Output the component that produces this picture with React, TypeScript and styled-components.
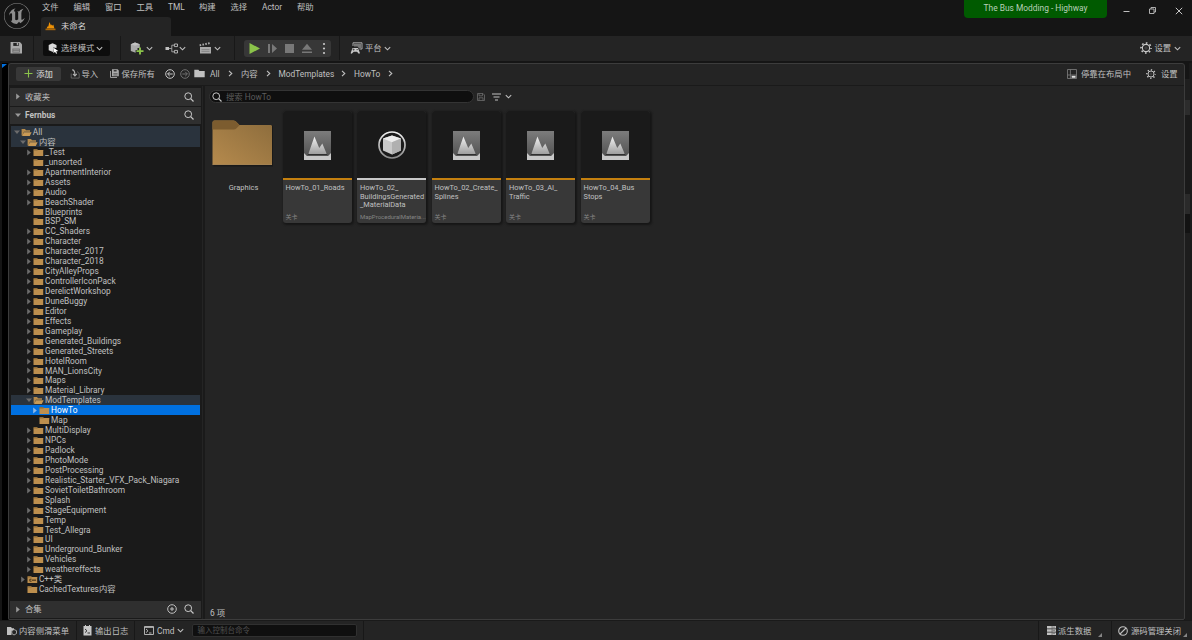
import React from 'react';
import styled, { createGlobalStyle, css } from 'styled-components';
import { SiUnrealengine } from 'react-icons/si';

const GlobalStyle = createGlobalStyle`
  * { box-sizing: border-box; }
  body { margin: 0; background: #151515; overflow: hidden; }
  svg { display: block; flex: none; }
`;

const Window = styled.div`
  width: 1192px;
  height: 640px;
  display: flex;
  flex-direction: column;
  background: #151515;
  color: #c0c0c0;
  font: 8.33px/10px Roboto, 'Noto Sans CJK SC', sans-serif;
  white-space: nowrap;
  overflow: hidden;
`;

const TitleBar = styled.header`
  height: 36px;
  flex: none;
  display: flex;
`;
const Logo = styled.div`
  width: 41px;
  padding: 3px 0 0 4px;
  color: #8d8d8d;
`;
const TitleMain = styled.div`
  flex: 1;
`;
const Menu = styled.nav`
  display: flex;
  height: 17px;
  padding: 2px 0 0 1px;
`;
const MenuItem = styled.span<{ $w: number }>`
  width: ${p => p.$w}px;
`;
const LevelTab = styled.div`
  width: 130px;
  height: 19px;
  border-radius: 3px 3px 0 0;
  background: #242424;
  display: flex;
  align-items: center;
  gap: 5px;
  padding: 0 0 1px 4px;
  color: #d8d8d8;
`;
const ProjectBadge = styled.div`
  width: 143px;
  height: 18px;
  background: #005a00;
  border-radius: 0 0 4px 4px;
  color: #b9d0b9;
  text-align: center;
  line-height: 17px;
  font-size: 8.4px;
`;
const WindowButtons = styled.div`
  width: 85px;
  height: 21px;
  display: flex;
  align-items: center;
  justify-content: space-between;
  padding: 0 9px 0 16px;
`;

const Toolbar = styled.div`
  height: 25px;
  flex: none;
  display: flex;
  align-items: center;
  background: #242424;
  padding-bottom: 1px;
`;
const Item = styled.div<{ $ml?: number; $w?: number; $gap?: number }>`
  display: flex;
  align-items: center;
  flex: none;
  gap: ${p => p.$gap ?? 3}px;
  margin-left: ${p => p.$ml ?? 0}px;
  ${p => p.$w !== undefined && css`width: ${p.$w}px;`}
`;
const Divider = styled.i<{ $ml?: number }>`
  width: 1px;
  align-self: stretch;
  flex: none;
  background: #181818;
  margin-left: ${p => p.$ml ?? 0}px;
`;
const ModeButton = styled(Item)`
  height: 16px;
  background: #0d0d0d;
  border-radius: 2px;
  padding-left: 5px;
`;
const PlayGroup = styled(Item)`
  height: 17px;
  background: #373737;
  border-radius: 3px;
`;
const Spacer = styled.div`
  flex: 1;
`;

const Workspace = styled.div`
  height: 559px;
  flex: none;
  display: flex;
  padding-top: 2px;
`;
const LeftStrip = styled.div`
  width: 8px;
  background: #000;
  border-left: 2px solid #151515;
`;
const RightStrip = styled.div`
  width: 7px;
  padding-top: 16px;
  border-right: 3px solid #1a1a1a;
  background: #151515;
`;
const StripBlock = styled.div<{ $h: number; $c: string }>`
  width: 5px;
  height: ${p => p.$h}px;
  background: ${p => p.$c};
`;
const Drawer = styled.section`
  width: 1177px;
  border: 1px solid #3c3c3c;
  border-radius: 3px 3px 2px 2px;
  background: #242424;
  display: flex;
  flex-direction: column;
`;
const DrawerBar = styled.div`
  height: 22px;
  flex: none;
  display: flex;
  align-items: center;
  padding-bottom: 2px;
  border-bottom: 1px solid #1a1a1a;
`;
const AddButton = styled(Item)`
  height: 14px;
  border-radius: 2px;
  background: #383838;
  color: #e0e0e0;
  justify-content: center;
`;
const DrawerBody = styled.div`
  flex: 1;
  display: flex;
  min-height: 0;
`;
const Sidebar = styled.aside`
  width: 193px;
  padding: 2px 1px 0 1px;
  display: flex;
  flex-direction: column;
  background: #1a1a1a;
`;
const SectionHead = styled.div<{ $bold?: boolean; $h: number }>`
  height: ${p => p.$h}px;
  flex: none;
  display: flex;
  align-items: center;
  gap: 4px;
  padding: 0 7px 1px 5px;
  background: #2f2f2f;
  margin-bottom: 1px;
  font-weight: ${p => (p.$bold ? 700 : 400)};
`;
const Tree = styled.div`
  flex: 1;
  min-height: 0;
  padding: 1px 1px 0 1px;
`;
const TreeRow = styled.div<{ $depth: number; $tone?: 'path' | 'selected' }>`
  height: 9.945px;
  display: flex;
  align-items: center;
  padding-top: 1px;
  padding-left: ${p => 2.6 + p.$depth * 6.1}px;
  line-height: 9.9px;
  font-size: 8.35px;
  background: ${p => (p.$tone === 'selected' ? '#0070e0' : p.$tone === 'path' ? '#2a333d' : 'none')};
  color: ${p => (p.$tone === 'selected' ? '#fff' : '#c0c0c0')};
  &:first-child {
    height: 10.945px;
    padding-top: 2px;
  }
`;
const Twisty = styled.span`
  width: 7.2px;
  flex: none;
`;
const RowIcon = styled.span`
  width: 12px;
  flex: none;
`;
const RowName = styled.span`
  padding-top: 1px;
`;
const Splitter = styled.div`
  width: 2px;
  background: #1a1a1a;
  margin-left: 1px;
`;
const Content = styled.main`
  flex: 1;
  display: flex;
  flex-direction: column;
  padding: 4px 0 1px 4px;
`;
const SearchRow = styled.div`
  display: flex;
  align-items: center;
  height: 13px;
`;
const SearchBox = styled.div`
  width: 265px;
  height: 13px;
  border-radius: 7px;
  background: #0f0f0f;
  border: 1px solid #343434;
  display: flex;
  align-items: center;
  gap: 4px;
  padding-left: 2px;
  color: #5c5c5c;
`;
const Grid = styled.div`
  flex: 1;
  display: flex;
  align-items: flex-start;
  padding: 8px 0 0 3px;
  gap: 5.5px;
`;
const FolderTile = styled.div`
  width: 62px;
  margin-right: 3px;
  padding-top: 9px;
  text-align: center;
`;
const FolderName = styled.div`
  margin-top: 16px;
  padding-left: 1px;
  font-size: 7.5px;
  line-height: 9px;
`;
const Card = styled.article`
  width: 69px;
  height: 112px;
  border-radius: 3px;
  background: #383838;
  box-shadow: 1px 1px 2px 1px #171717;
  overflow: hidden;
  display: flex;
  flex-direction: column;
`;
const Thumb = styled.div<{ $accent: string }>`
  height: 69px;
  flex: none;
  background: #1a1a1a;
  border-bottom: 2px solid ${p => p.$accent};
  display: flex;
  align-items: center;
  justify-content: center;
  padding-top: 1px;
`;
const AssetName = styled.div`
  padding: 4px 0 0 3px;
  font-size: 7.4px;
  line-height: 8.7px;
  flex: 1;
`;
const AssetType = styled.div`
  padding: 0 0 2px 3px;
  font-size: 6px;
  line-height: 9px;
  color: #858585;
`;
const CountLine = styled.div`
  padding-left: 1px;
`;

const StatusBar = styled.footer`
  height: 20px;
  flex: none;
  display: flex;
  align-items: center;
  background: #242424;
  border-top: 1px solid #1a1a1a;
`;
const Console = styled.div`
  width: 165px;
  height: 13px;
  margin-left: 8px;
  border-radius: 2px;
  background: #0f0f0f;
  border: 1px solid #303030;
  padding-left: 4px;
  line-height: 11px;
  font-size: 7.5px;
  color: #505050;
`;
const StatusCell = styled(Item)`
  height: 19px;
`;
const Corner = styled.i<{ $ml: number }>`
  width: 0;
  height: 0;
  align-self: flex-end;
  margin: 0 0 3px ${p => p.$ml}px;
  border-left: 4px solid transparent;
  border-bottom: 4px solid #858585;
`;

const Chevron = ({ right = false }: { right?: boolean }) => (
  <svg width="7" height="7" viewBox="0 0 7 7" fill="none" stroke="#c0c0c0" strokeWidth="1.1">
    <path d={right ? 'M2 .8 4.8 3.5 2 6.2' : 'M.8 2.2 3.5 4.8 6.2 2.2'} />
  </svg>
);
const Arrow = ({ open, color = '#6c6c6c' }: { open?: boolean; color?: string }) => (
  <svg width="6" height="7" viewBox="0 0 6 7" fill={color}>
    <path d={open ? 'M0 1.5H6L3 5Z' : 'M1.2 .5V6.5L4.8 3.5Z'} />
  </svg>
);
const Magnifier = ({ size = 10 }: { size?: number }) => (
  <svg width={size} height={size} viewBox="0 0 10 10" fill="none" stroke="#c8c8c8" strokeWidth="1">
    <circle cx="4.2" cy="4.2" r="3.4" />
    <path d="M6.7 6.7 9.5 9.5" strokeWidth="1.2" />
  </svg>
);
const SmallFolder = ({ open, cpp }: { open?: boolean; cpp?: boolean }) => (
  <svg width="11" height="9" viewBox="0 0 11 9">
    {open ? (
      <>
        <path d="M.6 7.5V1.1H4L5 2.2H9V3.8H3L1.4 7.5Z" fill="#b58a4b" />
        <path d="M3 4.3H10.6L8.8 8H1Z" fill="#c99a55" />
      </>
    ) : (
      <>
        <path d="M.5 1H4L5.1 2H10.2V3H.5Z" fill="#8f6c38" />
        <path d="M.5 2.6H4.2L5 2H10.2V8H.5Z" fill="#bd8f4e" />
      </>
    )}
    {cpp && <path d="M4.6 4.2H2.8V6.2H4.6M5.2 5.2H6.8M7.2 5.2H8.8M6 4.5V5.9M8 4.5V5.9" fill="none" stroke="#352611" strokeWidth=".8" />}
  </svg>
);
const SaveIcon = ({ size = 11, color = '#aaa' }: { size?: number; color?: string }) => (
  <svg width={size} height={size} viewBox="0 0 11 11">
    <path d="M.5 0H9L11 2V10.5H.5Z" fill={color} />
    <path d="M3 .8H8V3.6H3Z" fill="#242424" />
    <path d="M6.2 .8H7.4V3H6.2Z" fill={color} />
    <path d="M2.2 6H9V9.7H2.2Z" fill="#6a6a6a" />
    <path d="M3 7.2H8.2M3 8.6H8.2" stroke={color} strokeWidth=".7" />
  </svg>
);
const SaveOutline = () => (
  <svg width="8" height="8" viewBox="0 0 8 8" fill="none" stroke="#6c6c6c" strokeWidth=".8">
    <path d="M.5.5H6L7.5 2V7.5H.5ZM2 .5V2.8H5.5V.5M2 7.5V4.8H6V7.5" />
  </svg>
);
const SaveAllIcon = () => (
  <svg width="9" height="9" viewBox="0 0 9 9">
    <path d="M.5 2V8.5H7" fill="none" stroke="#9a9a9a" />
    <path d="M2 .3H7.6L8.8 1.5V7.3H2Z" fill="#aaa" />
    <path d="M3.7 1H6.6V2.5H3.7Z" fill="#3a3a3a" />
    <path d="M3.4 4.6H7.5M3.4 6H7.5" stroke="#4a4a4a" strokeWidth=".7" />
  </svg>
);
const ModeIcon = () => (
  <svg width="11" height="11" viewBox="0 0 11 11">
    <path d="M4.5.3 8.5 2V5L5 4.4V9L.7 7.3V2Z" fill="#d9d9d9" />
    <path d="M5.2 4.5 10.3 8 8 8.4 9.2 10.3 8.1 10.8 7 8.8 5.5 10.3Z" fill="#fff" />
  </svg>
);
const AddCube = () => (
  <svg width="14" height="13" viewBox="0 0 14 13">
    <path d="M5 .5 9.8 2.2V6H7.5V8H5.6V10.8L.8 9V2.2Z" fill="#aaa" />
    <path d="M.8 2.2 5 3.8 9.8 2.2 5 .5Z" fill="#c2c2c2" />
    <path d="M10 5.6V12.6M6.5 9.1H13.5" stroke="#8bc34a" strokeWidth="1.9" />
  </svg>
);
const BlueprintIcon = () => (
  <svg width="14" height="11" viewBox="0 0 14 11">
    <path d="M.5 4H4V7H.5Z" fill="#c0c0c0" />
    <path d="M4 5.5H6.8M6.8 5.5V2.2H9M6.8 5.5V8.8H9" fill="none" stroke="#aaa" strokeWidth=".9" />
    <path d="M9.4 1H12.5V3.6H9.4ZM9.4 7.4H12.5V10H9.4Z" fill="#242424" stroke="#c0c0c0" strokeWidth=".9" />
  </svg>
);
const Clapper = () => (
  <svg width="13" height="12" viewBox="0 0 13 12">
    <path d="M1 5H12V11.5H1Z" fill="#aaa" />
    <path d="M.6 3.4 11.8.9" stroke="#aaa" strokeWidth="1.9" strokeDasharray="1.6 1.3" />
    <path d="M2.5 7.6H10.5M2.5 9.4H10.5" stroke="#6d6d6d" strokeWidth=".6" />
  </svg>
);
const Platforms = () => (
  <svg width="13" height="12" viewBox="0 0 13 12">
    <path d="M3 .8H12V7H9.5M3 .8V4" fill="none" stroke="#aaa" />
    <path d="M4 1.8H11V6.2H9L7.5 4.5H4Z" fill="#777" />
    <path d="M2.5 6H8L10 11.2 8.8 11.8 7 9.8H3.7L1.7 11.8.6 11.2Z" fill="#c8c8c8" />
    <path d="M2.6 7.6H4.6M3.6 6.6V8.6M6.4 7.6H8" stroke="#333" strokeWidth=".7" />
  </svg>
);
const Gear = ({ size = 12 }: { size?: number }) => (
  <svg width={size} height={size} viewBox="0 0 12 12" fill="none" stroke="#c8c8c8">
    <circle cx="6" cy="6" r="3.6" strokeWidth="1.1" />
    <circle cx="6" cy="6" r="5" strokeWidth="1.7" strokeDasharray="1.6 2.327" strokeDashoffset=".8" />
    <circle cx="6" cy="6" r="1.2" strokeWidth=".4" opacity=".5" />
  </svg>
);
const NavCircle = ({ back }: { back?: boolean }) => (
  <svg width="10" height="10" viewBox="0 0 10 10" fill="none" stroke={back ? '#c8c8c8' : '#707070'}>
    <circle cx="5" cy="5" r="4.3" />
    <path d={back ? 'M7.7 5H2.7M4.8 2.8 2.6 5 4.8 7.2' : 'M2.3 5H7.3M5.2 2.8 7.4 5 5.2 7.2'} />
  </svg>
);
const ImportIcon = () => (
  <svg width="10" height="10" viewBox="0 0 10 10" fill="none" stroke="#b5b5b5">
    <path d="M1.2 4.5V9.1H9.2V4.5L7 2.5" strokeWidth=".8" opacity=".5" />
    <path d="M2.2.9C4.2.9 4.9 2 4.9 6M3 4.9 4.9 7 6.8 4.9" strokeWidth="1.1" />
  </svg>
);
const DockIcon = () => (
  <svg width="10" height="10" viewBox="0 0 10 10" fill="none" stroke="#808080" strokeWidth=".8">
    <path d="M.5.5H9.5V9.5H.5ZM3.4.5V9.5M.5 6H9.5" />
    <path d="M4.6 6.8H8.6V8.8H4.6Z" fill="#e0e0e0" stroke="none" />
  </svg>
);
const LevelIcon = () => (
  <svg width="11" height="10" viewBox="0 0 11 10">
    <path d="M1.6 7.6 2.4 5.4 3.3 5.6 4.4 1 6 4.5 6.7 3.4 7.6 4.8 8.3 3.6 9.4 7.6Z" fill="#ee9206" />
    <path d="M.5 7.6H10.5V9.2H.5Z" fill="#a9660a" />
  </svg>
);
const MountainIcon = () => (
  <svg width="27" height="29" viewBox="0 0 28 29" preserveAspectRatio="none">
    <defs>
      <linearGradient id="sky" x1="0" y1="0" x2="0" y2="1">
        <stop offset="0" stopColor="#7c7c7c" />
        <stop offset="1" stopColor="#4c4c4c" />
      </linearGradient>
      <linearGradient id="peak" x1="0" y1="0" x2="0" y2="1">
        <stop offset="0" stopColor="#f2f2f2" />
        <stop offset="1" stopColor="#a0a0a0" />
      </linearGradient>
    </defs>
    <path d="M0 0H28V29H0Z" fill="url(#sky)" />
    <path d="M0 22 3 24.9H25L28 22V29H0Z" fill="#c8c8c8" />
    <path d="M4 23.2H24" stroke="#303030" strokeWidth="1.6" />
    <path d="M4.5 22.9 10.8 5.5 15.8 17 19 12.5 23.6 22.9Z" fill="url(#peak)" />
  </svg>
);
const CubeIcon = () => (
  <svg width="30" height="30" viewBox="0 0 30 30">
    <defs>
      <linearGradient id="ring" x1="0" y1="0" x2="0" y2="1">
        <stop offset="0" stopColor="#eee" />
        <stop offset="1" stopColor="#8c8c8c" />
      </linearGradient>
    </defs>
    <circle cx="15" cy="15" r="13" fill="#1b1b1b" stroke="url(#ring)" strokeWidth="1.7" />
    <path d="M15 5.5 24 8.6V20.5L15 24.5 6 20.5V8.6Z" fill="#c9c9c9" />
    <path d="M6 8.6 15 5.5 24 8.6 15 12.2Z" fill="#ececec" />
    <path d="M15 12.2 24 8.6V20.5L15 24.5Z" fill="#b0b0b0" />
  </svg>
);
const BigFolder = () => (
  <svg width="62" height="47" viewBox="0 0 62 47">
    <defs>
      <linearGradient id="folder" x1="0" y1="1" x2="1" y2="0">
        <stop offset="0" stopColor="#b58a4d" />
        <stop offset="1" stopColor="#8c6c3c" />
      </linearGradient>
    </defs>
    <path d="M1.5 3Q1.5 1 3.5 1H22Q24 1 25 2.5L28 5.5H60Q61 5.5 61 7V46.5H1.5Z" fill="#151515" opacity=".7" />
    <path d="M.5 2.5Q.5.5 2.5.5H21.5Q23.5.5 24.5 2L27.5 5H59Q60 5 60 6.5V44.5H.5Z" fill="url(#folder)" />
    <path d="M.5 2.5Q.5.5 2.5.5H21.5Q23.5.5 24.5 2L27.5 5.2 24.5 8.3Q23.5 9.5 21.5 9.5H.5Z" fill="#7c5c2f" />
    <path d="M.5 44.5H60" stroke="#c29a60" strokeWidth=".7" />
  </svg>
);

type Row = [name: string, depth: number, state: '+' | '-' | '', tone?: 'path' | 'selected'];
const treeRows: Row[] = [
  ['All', 0, '-', 'path'],
  ['内容', 1, '-', 'path'],
  ['_Test', 2, '+'],
  ['_unsorted', 2, ''],
  ['ApartmentInterior', 2, '+'],
  ['Assets', 2, '+'],
  ['Audio', 2, '+'],
  ['BeachShader', 2, '+'],
  ['Blueprints', 2, ''],
  ['BSP_SM', 2, ''],
  ['CC_Shaders', 2, '+'],
  ['Character', 2, '+'],
  ['Character_2017', 2, '+'],
  ['Character_2018', 2, '+'],
  ['CityAlleyProps', 2, '+'],
  ['ControllerIconPack', 2, '+'],
  ['DerelictWorkshop', 2, '+'],
  ['DuneBuggy', 2, '+'],
  ['Editor', 2, '+'],
  ['Effects', 2, '+'],
  ['Gameplay', 2, '+'],
  ['Generated_Buildings', 2, '+'],
  ['Generated_Streets', 2, '+'],
  ['HotelRoom', 2, '+'],
  ['MAN_LionsCity', 2, '+'],
  ['Maps', 2, '+'],
  ['Material_Library', 2, '+'],
  ['ModTemplates', 2, '-', 'path'],
  ['HowTo', 3, '+', 'selected'],
  ['Map', 3, ''],
  ['MultiDisplay', 2, '+'],
  ['NPCs', 2, '+'],
  ['Padlock', 2, '+'],
  ['PhotoMode', 2, '+'],
  ['PostProcessing', 2, '+'],
  ['Realistic_Starter_VFX_Pack_Niagara', 2, '+'],
  ['SovietToiletBathroom', 2, '+'],
  ['Splash', 2, ''],
  ['StageEquipment', 2, '+'],
  ['Temp', 2, '+'],
  ['Test_Allegra', 2, '+'],
  ['UI', 2, '+'],
  ['Underground_Bunker', 2, '+'],
  ['Vehicles', 2, '+'],
  ['weathereffects', 2, '+'],
  ['C++类', 1, '+'],
  ['CachedTextures内容', 1, ''],
];

const menus: [string, number][] = [
  ['文件', 31.5], ['编辑', 31.5], ['窗口', 31.5], ['工具', 31.5], ['TML', 31],
  ['构建', 31.5], ['选择', 31.5], ['Actor', 35], ['帮助', 30],
];

const assets = [
  { lines: ['HowTo_01_Roads'], type: '关卡' },
  { lines: ['HowTo_02_', 'BuildingsGenerated', '_MaterialData'], type: 'MapProceduralMateria...', cube: true },
  { lines: ['HowTo_02_Create_', 'Splines'], type: '关卡' },
  { lines: ['HowTo_03_AI_', 'Traffic'], type: '关卡' },
  { lines: ['HowTo_04_Bus', 'Stops'], type: '关卡' },
];

export default function App() {
  return (
    <Window>
      <GlobalStyle />
      <TitleBar>
        <Logo><SiUnrealengine size={26} /></Logo>
        <TitleMain>
          <Menu>{menus.map(([label, w]) => <MenuItem key={label} $w={w}>{label}</MenuItem>)}</Menu>
          <LevelTab><LevelIcon />未命名</LevelTab>
        </TitleMain>
        <ProjectBadge>The Bus Modding - Highway</ProjectBadge>
        <WindowButtons>
          <svg width="7" height="8" viewBox="0 0 7 8" stroke="#c0c0c0"><path d="M.5 4.5H6.5" /></svg>
          <svg width="7" height="7" viewBox="0 0 7 7" fill="none" stroke="#c0c0c0" strokeWidth=".9"><path d="M.5 2H5V6.5H.5ZM2 2V.5H6.5V5H5" /></svg>
          <svg width="8" height="8" viewBox="0 0 8 8" stroke="#c8c8c8"><path d="M.8.8 7.2 7.2M7.2.8.8 7.2" /></svg>
        </WindowButtons>
      </TitleBar>

      <Toolbar>
        <Item $ml={10} $w={23}><SaveIcon size={12} /></Item>
        <Divider />
        <ModeButton $ml={9} $w={67} $gap={2}><ModeIcon />选择模式<Chevron /></ModeButton>
        <Divider $ml={10} />
        <Item $ml={9} $w={35} $gap={2}><AddCube /><Chevron /></Item>
        <Item $w={34} $gap={0}><BlueprintIcon /><Chevron /></Item>
        <Item $w={35} $gap={2}><Clapper /><Chevron /></Item>
        <Divider />
        <PlayGroup $ml={9} $w={87} $gap={0}>
          <svg width="87" height="17" viewBox="0 0 87 17" fill="#787878">
            <path d="M5.5 3 16 8.5 5.5 14Z" fill="#8bc34a" />
            <path d="M24 4H26V13H24ZM28 4 33 8.5 28 13Z" />
            <path d="M41 4H50V13H41ZM58 11.5H68V13H58ZM63 3.8 68 9.8H58Z" />
            <g fill="#c8c8c8"><circle cx="80" cy="4" r="1.1" /><circle cx="80" cy="8.5" r="1.1" /><circle cx="80" cy="13" r="1.1" /></g>
          </svg>
        </PlayGroup>
        <Divider $ml={8} />
        <Item $ml={10} $gap={2}><Platforms />平台<Chevron /></Item>
        <Spacer />
        <Item $w={52.5} $gap={3}><Gear />设置<Chevron /></Item>
      </Toolbar>

      <Workspace>
        <LeftStrip>
          <svg width="5" height="5" viewBox="0 0 5 5"><path d="M0 1H5L0 5Z" fill="#0070e0" /></svg>
        </LeftStrip>
        <Drawer>
          <DrawerBar>
            <AddButton $ml={7} $w={45}>
              <svg width="9" height="9" viewBox="0 0 9 9" stroke="#8bc34a" strokeWidth="1.1"><path d="M4.5.5V8.5M.5 4.5H8.5" /></svg>
              添加
            </AddButton>
            <Item $ml={8.5} $w={40} $gap={2}><ImportIcon />导入</Item>
            <Item $w={55} $gap={3}><SaveAllIcon />保存所有</Item>
            <Item $w={15}><NavCircle back /></Item>
            <Item $w={14.5}><NavCircle /></Item>
            <Item $w={16}>
              <svg width="11" height="9" viewBox="0 0 11 9" fill="#c0c0c0"><path d="M.3.8H4.4L5.4 2H10.7V8.3H.3Z" /></svg>
            </Item>
            <Item $w={17}>All</Item><Item $w={14}><Chevron right /></Item>
            <Item $w={23.5}>内容</Item><Item $w={14}><Chevron right /></Item>
            <Item $w={61.5}>ModTemplates</Item><Item $w={14}><Chevron right /></Item>
            <Item $w={32.5}>HowTo</Item><Item><Chevron right /></Item>
            <Spacer />
            <Item $w={79} $gap={4}><DockIcon />停靠在布局中</Item>
            <Item $w={38} $gap={5}><Gear size={10} />设置</Item>
          </DrawerBar>
          <DrawerBody>
            <Sidebar>
              <SectionHead $h={18}><Arrow color="#999" />收藏夹<Spacer /><Magnifier /></SectionHead>
              <SectionHead $h={17} $bold><Arrow open color="#999" />Fernbus<Spacer /><Magnifier /></SectionHead>
              <Tree>
                {treeRows.map(([name, depth, state, tone]) => (
                  <TreeRow key={name} $depth={depth} $tone={tone}>
                    <Twisty>{state && <Arrow open={state === '-'} color={tone === 'selected' ? '#8fb8e6' : undefined} />}</Twisty>
                    <RowIcon><SmallFolder open={state === '-'} cpp={name === 'C++类'} /></RowIcon>
                    <RowName>{name}</RowName>
                  </TreeRow>
                ))}
              </Tree>
              <SectionHead $h={17}>
                <Arrow color="#999" />合集<Spacer />
                <svg width="10" height="10" viewBox="0 0 10 10" fill="none" stroke="#c0c0c0"><circle cx="5" cy="5" r="4.3" /><path d="M5 3V7M3 5H7" /></svg>
                <Item $ml={3}><Magnifier /></Item>
              </SectionHead>
            </Sidebar>
            <Splitter />
            <Content>
              <SearchRow>
                <SearchBox><Magnifier />搜索 HowTo</SearchBox>
                <Item $ml={3}><SaveOutline /></Item>
                <Item $ml={7} $gap={4}>
                  <svg width="9" height="8" viewBox="0 0 9 8" stroke="#c0c0c0" strokeWidth="1.2"><path d="M0 1H9M1.5 4H7.5M3 7H6" /></svg>
                  <Chevron />
                </Item>
              </SearchRow>
              <Grid>
                <FolderTile><BigFolder /><FolderName>Graphics</FolderName></FolderTile>
                {assets.map(a => (
                  <Card key={a.lines.join('')}>
                    <Thumb $accent={a.cube ? '#c8c8c8' : '#c4800f'}>{a.cube ? <CubeIcon /> : <MountainIcon />}</Thumb>
                    <AssetName>{a.lines.map(l => <div key={l}>{l}</div>)}</AssetName>
                    <AssetType>{a.type}</AssetType>
                  </Card>
                ))}
              </Grid>
              <CountLine>6 项</CountLine>
            </Content>
          </DrawerBody>
        </Drawer>
        <RightStrip>
          <StripBlock $h={21} $c="#1f1f1f" />
          <StripBlock $h={15} $c="#2c2c2c" />
          <StripBlock $h={79} $c="#1a1a1a" />
          <StripBlock $h={20} $c="#2a2a2a" />
          <StripBlock $h={19} $c="#131313" />
          <StripBlock $h={387} $c="#1d1d1d" />
        </RightStrip>
      </Workspace>

      <StatusBar>
        <StatusCell $ml={7} $w={69} $gap={2}>
          <svg width="10" height="10" viewBox="0 0 10 10">
            <path d="M0 1H4L5 2.2H7V4L4.5 5V9H0Z" fill="#c0c0c0" />
            <path d="M7 3.5 9.5 4.7V7.5L7 9 4.8 7.5V4.7Z" fill="#242424" stroke="#c0c0c0" strokeWidth=".8" />
          </svg>
          内容侧滑菜单
        </StatusCell>
        <Divider />
        <StatusCell $ml={6} $w={51} $gap={3}>
          <svg width="9" height="11" viewBox="0 0 9 11">
            <path d="M.5 1H2V0H3V1H6V0H7V1H8.5V10.5H.5Z" fill="#c8c8c8" />
            <path d="M2 4 4 5.8 2 7.6M4.5 8H7" fill="none" stroke="#222" strokeWidth=".9" />
          </svg>
          输出日志
        </StatusCell>
        <Divider />
        <StatusCell $ml={9} $gap={3}>
          <svg width="10" height="9" viewBox="0 0 10 9" fill="none" stroke="#c0c0c0" strokeWidth=".9">
            <path d="M.5.5H9.5V8.5H.5ZM.5 1.4H9.5M2 3 4 4.8 2 6.6M5 7H7.5" />
          </svg>
          Cmd
          <Chevron />
        </StatusCell>
        <Console>输入控制台命令</Console>
        <Divider $ml={6} />
        <Spacer />
        <Divider />
        <StatusCell $ml={8} $w={56} $gap={2}>
          <svg width="9" height="9" viewBox="0 0 9 9" fill="#c0c0c0">
            <path d="M0 0H9V2.5H0ZM0 3.2H9V5.7H0ZM0 6.4H9V9H0Z" />
            <path d="M5 0V9M5.5 1.2H8M5.5 4.4H8M5.5 7.6H8" stroke="#555" strokeWidth=".6" />
          </svg>
          派生数据
          <Corner $ml={5} />
        </StatusCell>
        <Divider $ml={8} />
        <StatusCell $ml={6} $w={69} $gap={3}>
          <svg width="10" height="10" viewBox="0 0 10 10" fill="none" stroke="#c0c0c0" strokeWidth="1.1"><circle cx="5" cy="5" r="4.3" /><path d="M2 8 8 2" /></svg>
          源码管理关闭
          <Corner $ml={-1} />
        </StatusCell>
        <Item $w={5} />
      </StatusBar>
    </Window>
  );
}
